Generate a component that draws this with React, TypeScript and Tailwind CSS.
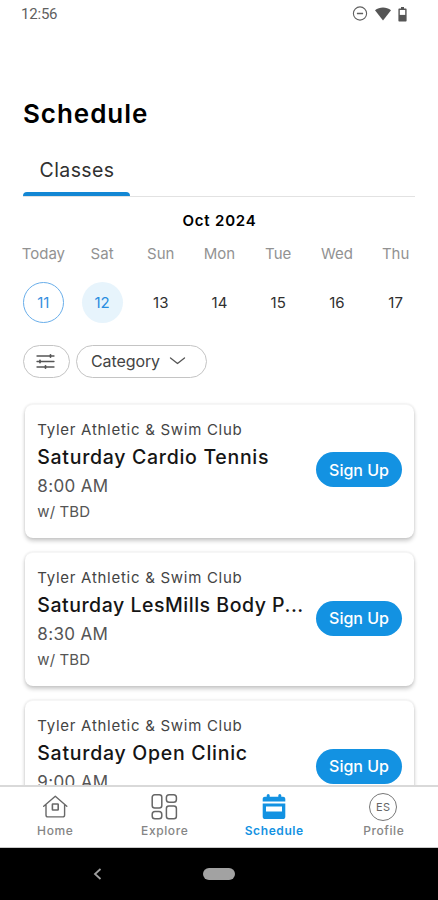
import type { ReactNode } from 'react';

const days = [
  { name: 'Today', date: '11', state: 'today' },
  { name: 'Sat', date: '12', state: 'selected' },
  { name: 'Sun', date: '13', state: '' },
  { name: 'Mon', date: '14', state: '' },
  { name: 'Tue', date: '15', state: '' },
  { name: 'Wed', date: '16', state: '' },
  { name: 'Thu', date: '17', state: '' },
];

const classes = [
  { title: 'Saturday Cardio Tennis', time: '8:00 AM', tracking: 'tracking-[0.7px]' },
  { title: 'Saturday LesMills Body P...', time: '8:30 AM', tracking: 'tracking-[0.52px]' },
  { title: 'Saturday Open Clinic', time: '9:00 AM', tracking: 'tracking-[0.73px]' },
];

function StatusBar() {
  return (
    <div className="flex h-7 shrink-0 items-center justify-between pl-[21px] pr-[31px] text-[15px] text-[#5f5f5f]">
      <span className="font-['Roboto',sans-serif] tracking-[-0.2px]">12:56</span>
      <div className="flex items-center">
        <svg width="16" height="16" viewBox="0 0 16 16" fill="none" stroke="#606060" strokeWidth="1.1">
          <circle cx="8" cy="7.5" r="6.6" />
          <path d="M4.9 7.5h6.2" strokeWidth="1.5" />
        </svg>
        <svg className="ml-[7px]" width="16" height="14" viewBox="0 0 16 14" fill="#555">
          <path d="M0 3.2C4.6-.3 11.4-.3 16 3.2L8 13.4z" />
        </svg>
        <svg className="ml-[7px]" width="9" height="15" viewBox="0 0 9 15">
          <path d="M3 0h3v1.6h1.6c.6 0 1 .4 1 1v11c0 .6-.4 1-1 1H1.4c-.6 0-1-.4-1-1v-11c0-.6.4-1 1-1H3z" fill="#555" />
          <path d="M1.8 3h5.4v4.9H1.8z" fill="#fff" />
        </svg>
      </div>
    </div>
  );
}

function ClassCard({ title, time, tracking }: { title: string; time: string; tracking: string }) {
  return (
    <div className="flex h-[134.4px] shrink-0 items-center justify-between rounded-[8px] border-t border-[#f6f6f6] bg-white pl-[12.3px] pr-3 shadow-[0_3px_4px_rgba(0,0,0,0.2),0_0_3px_rgba(0,0,0,0.1)]">
      <div className="whitespace-nowrap text-[#555]">
        <div className="text-[15px] leading-[22px] tracking-[0.72px] text-[#444]">Tyler Athletic &amp; Swim Club</div>
        <div className={`text-[19.5px] font-medium leading-[33px] text-[#151515] ${tracking}`}>{title}</div>
        <div className="text-[17px] leading-[25px] tracking-[0.35px]">{time}</div>
        <div className="text-[15px] leading-[25px] tracking-[0.1px]">w/ TBD</div>
      </div>
      <button className="mb-[3px] h-[35px] w-[86px] shrink-0 rounded-full bg-[#1392e2] text-[16px] font-medium text-white">Sign Up</button>
    </div>
  );
}

function HomeIcon() {
  return (
    <svg width="26" height="28" viewBox="0 0 26 28" fill="none" stroke="#686868" strokeWidth="1.4" strokeLinecap="round" strokeLinejoin="round">
      <path d="M1.7 13.2 13.3 3.3l11.5 9.9M4 11.7V22c0 1.100.8 1.900 1.900 1.900h14.800c1.100 0 1.900-.8 1.900-1.900V11.700" />
      <rect x="10.4" y="11" width="5.800" height="6" rx=".5" strokeWidth="1.600" />
    </svg>
  );
}

function ExploreIcon() {
  return (
    <svg width="28" height="28" viewBox="0 0 28 28" fill="none" stroke="#666" strokeWidth="1.5">
      <rect x="2.200" y="1.8" width="9.600" height="13.2" rx="2.5" />
      <rect x="16.400" y="1.8" width="10" height="7.4" rx="2.8" />
      <rect x="2.200" y="18.6" width="9.600" height="7.2" rx="2.8" />
      <rect x="16.400" y="12.9" width="10" height="12.9" rx="2.5" />
    </svg>
  );
}

function ScheduleIcon() {
  return (
    <svg className="ml-px" width="26" height="28" viewBox="0 0 26 28" fill="#1392e2">
      <path d="M1.7 8.600V6c0-1.300 1-2.200 2.200-2.200h1.800V2.500a1.500 1.500 0 0 1 3 0v1.300h8.600V2.500a1.500 1.500 0 0 1 3 0v1.300h1.800c1.200 0 2.200.9 2.200 2.200v2.600z" />
      <path fillRule="evenodd" d="M1.7 10.600h22.600v13.200c0 1.400-1 2.300-2.300 2.300H4c-1.300 0-2.300-.9-2.300-2.300zM5 13.400v5.200h16v-5.200z" />
    </svg>
  );
}

function NavItem({ label, active, children }: { label: string; active?: boolean; children: ReactNode }) {
  return (
    <div className={`flex w-[109.5px] flex-col items-center text-[12px] tracking-[0.6px] ${active ? 'font-semibold text-[#1392e2]' : 'font-medium text-[#858585]'}`}>
      <div className="flex h-7 items-center">{children}</div>
      <span className="mt-[2px] pl-px leading-[16px]">{label}</span>
    </div>
  );
}

export default function App() {
  return (
    <div className="flex h-[900px] w-[438px] flex-col overflow-hidden bg-white font-['Inter',sans-serif]">
      <StatusBar />
      <main className="flex min-h-0 flex-1 flex-col overflow-hidden">
        <h1 className="mt-[68px] shrink-0 pl-[23px] text-[26px] font-semibold leading-[36px] tracking-[0.95px] text-black">Schedule</h1>
        <div className="mx-[23px] mt-[17px] flex h-12 shrink-0 border-b border-[#e2e2e2]">
          <div className="flex w-[107px] flex-col items-center">
            <span className="flex-1 pl-px pt-[8px] text-[19.5px] leading-[26px] tracking-[0.4px] text-[#303030]">Classes</span>
            <span className="h-1 w-full rounded-t-[4px] bg-[#1387d4]" />
          </div>
        </div>
        <div className="mt-[13.5px] shrink-0 pl-[1px] text-center text-[15px] font-semibold leading-[20px] tracking-[0.8px] text-black">Oct 2024</div>
        <div className="ml-[14px] mt-[13px] grid w-[411px] shrink-0 grid-cols-7">
          {days.map((d) => (
            <div key={d.name} className="flex flex-col items-center">
              <span className="text-[15px] leading-[20px] text-[#929292]">{d.name}</span>
              <span
                className={`mt-[18px] flex size-[41px] items-center justify-center rounded-full pt-[2px] text-[15px] ${
                  d.state === 'today'
                    ? 'border border-[#69aeea] text-[#3690e0]'
                    : d.state === 'selected'
                      ? 'bg-[#e7f4fc] text-[#298de0]'
                      : 'text-[#303030]'
                }`}
              >
                {d.date}
              </span>
            </div>
          ))}
        </div>
        <div className="ml-[23px] mt-[22px] flex shrink-0 gap-[6px]">
          <button className="flex h-[33px] w-[47px] items-center justify-center rounded-full border border-[#c4c4c4] pr-[3px]">
            <svg width="19" height="15" viewBox="0 0 19 15" fill="none" stroke="#555" strokeWidth="1.3" strokeLinecap="round">
              <path d="M1 2h17M1 7.5h17M1 13h17" />
              <path d="M14.500 1v2M4 6.500v2M9.500 12v2" strokeWidth="1.8" />
            </svg>
          </button>
          <button className="flex h-[33px] w-[131px] items-center rounded-full border border-[#c4c4c4] pl-[14px] text-[16px] tracking-[-0.1px] text-[#444]">
            Category
            <svg className="ml-[9px]" width="17" height="10" viewBox="0 0 17 10" fill="none" stroke="#555" strokeWidth="1.3" strokeLinecap="round" strokeLinejoin="round">
              <path d="m1.500 2 7 5.500 7-5.500" />
            </svg>
          </button>
        </div>
        <div className="flex flex-col gap-[14px] pl-[25px] pr-[24px] pt-[26px]">
          {classes.map((c) => (
            <ClassCard key={c.title} {...c} />
          ))}
        </div>
      </main>
      <nav className="flex h-[63px] shrink-0 border-b border-t-2 border-b-[#c9c9c9] border-t-[#d9d9d9] bg-white pt-[6px]">
        <NavItem label="Home"><HomeIcon /></NavItem>
        <NavItem label="Explore"><ExploreIcon /></NavItem>
        <NavItem label="Schedule" active><ScheduleIcon /></NavItem>
        <NavItem label="Profile">
          <span className="flex size-7 items-center justify-center rounded-full border border-[#777] text-[11px] font-normal tracking-[0.3px] text-[#666]">ES</span>
        </NavItem>
      </nav>
      <footer className="grid h-[52px] shrink-0 grid-cols-[1fr_48px_1fr] items-center bg-black">
        <svg className="ml-[93px]" width="9" height="12" viewBox="0 0 9 12" fill="none" stroke="#a0a0a0" strokeWidth="1.8">
          <path d="M7.5 1 2 6l5.500 5" />
        </svg>
        <span className="ml-2 h-3 w-8 rounded-full bg-[#a2a2a2]" />
      </footer>
    </div>
  );
}
